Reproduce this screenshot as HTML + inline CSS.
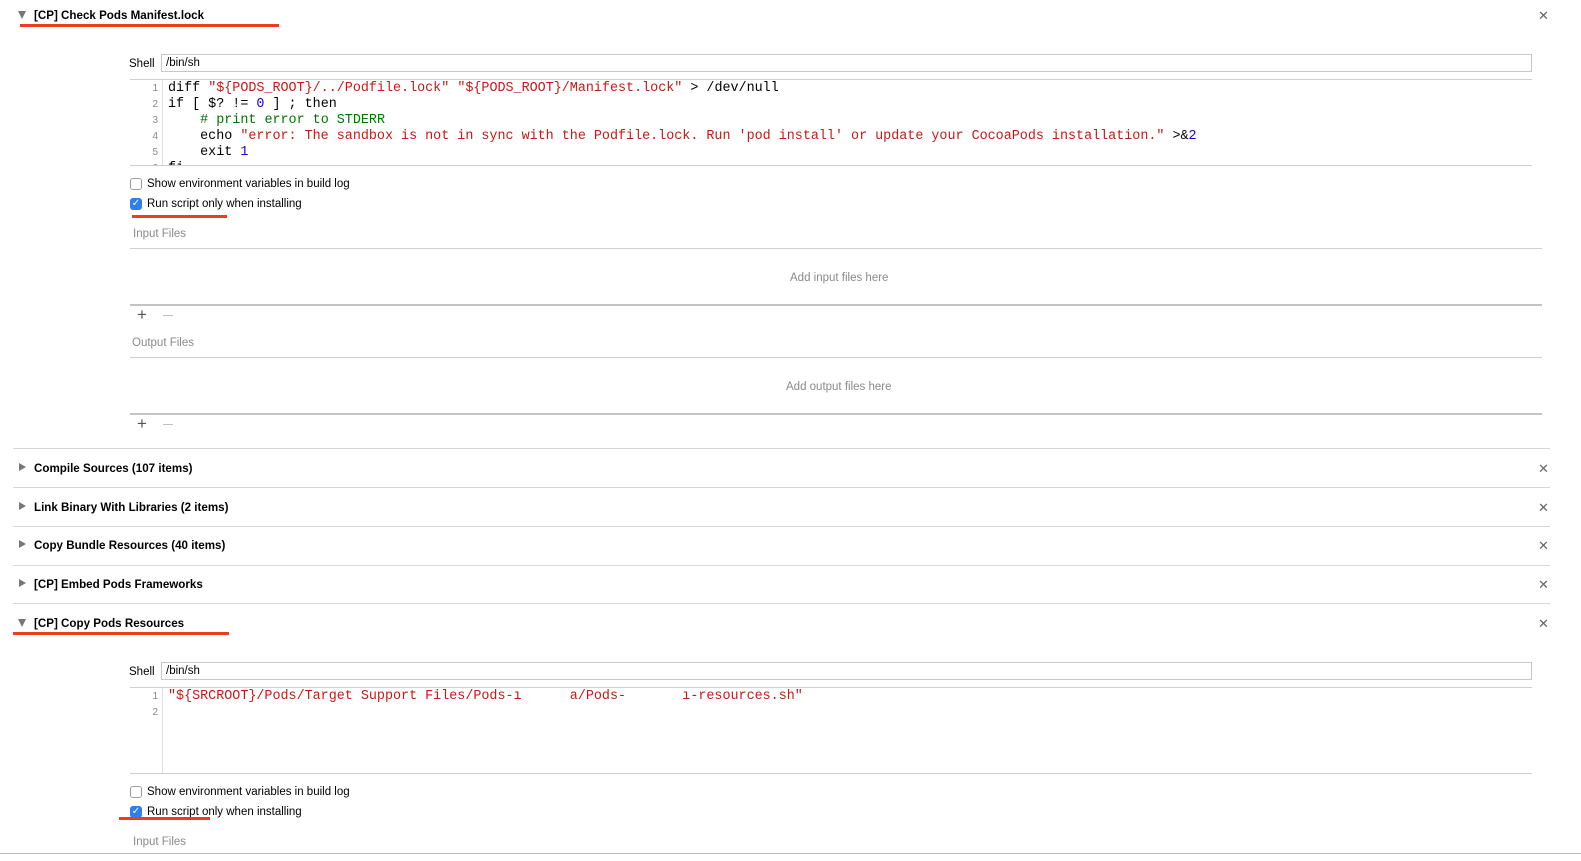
<!DOCTYPE html>
<html><head><meta charset="utf-8"><style>
*{margin:0;padding:0;box-sizing:border-box}
body{width:1581px;height:861px;background:#fff;position:relative;overflow:hidden;font-family:"Liberation Sans",Arial,sans-serif;color:#000}
.a{position:absolute}
.h{font-weight:bold;font-size:11.6px;margin-top:1px}
.tri{position:absolute;width:0;height:0}
.down{border-left:4.5px solid transparent;border-right:4.5px solid transparent;border-top:8px solid #777}
.right{border-top:4.5px solid transparent;border-bottom:4.5px solid transparent;border-left:7px solid #777}
.x{position:absolute;font-size:13px;color:#666;left:1538px;margin-top:1px}
.red{position:absolute;height:3px;background:#f03b20}
.sep{position:absolute;left:13px;width:1537px;height:1px;background:#d8d8d8}
.lbl{font-size:11.5px;margin-top:1px}
.gray{color:#8a8a8a;font-size:11.5px;margin-top:1px}
.inp{position:absolute;left:161px;width:1371px;height:18px;border:1px solid #c8c8c8;font-size:11.5px;padding:2px 4px}
.code{position:absolute;left:168px;font-family:"Liberation Mono",monospace;font-size:13.4px;line-height:16px;white-space:pre;margin-top:1px}
.ln{position:absolute;left:140px;width:18px;text-align:right;font-family:"Liberation Sans",sans-serif;font-size:10px;line-height:16px;color:#888;margin-top:1px}
.s{color:#c41a16}.c{color:#007400}.n{color:#1c00cf}
.cb{position:absolute;left:130px;width:12px;height:12px;border:1px solid #999;border-radius:3px;background:#fff}
.cbo{background:#2d7ff0;border-color:#2d7ff0;color:#fff;font-size:10px;line-height:10px;text-align:center}
.hl{position:absolute;height:1px;background:#cfcfcf}
.pm{position:absolute;font-size:17px;color:#555}
.mn{position:absolute;width:10px;height:1px;background:#c0c0c0}
</style></head><body>

<div class="tri down" style="left:18px;top:11px"></div>
<div class="a h" style="left:34px;top:8px">[CP] Check Pods Manifest.lock</div>
<div class="red" style="left:20px;top:24px;width:259px"></div>
<div class="x" style="top:7px">✕</div>

<div class="a lbl" style="left:129px;top:57px">Shell</div>
<div class="inp" style="top:54px">/bin/sh</div>
<div class="hl" style="left:130px;top:79px;width:1402px"></div>
<div class="a" style="left:162px;top:80px;width:1px;height:86px;background:#e0e0e0"></div>
<div class="a" style="left:130px;top:80px;width:1402px;height:86px;overflow:hidden">
<div class="ln" style="left:10px;top:0">1<br>2<br>3<br>4<br>5<br>6</div>
<div class="code" style="left:38px;top:0">diff <span class="s">"${PODS_ROOT}/../Podfile.lock"</span> <span class="s">"${PODS_ROOT}/Manifest.lock"</span> &gt; /dev/null
if [ $? != <span class="n">0</span> ] ; then
    <span class="c"># print error to STDERR</span>
    echo <span class="s">"error: The sandbox is not in sync with the Podfile.lock. Run 'pod install' or update your CocoaPods installation."</span> &gt;&amp;<span class="n">2</span>
    exit <span class="n">1</span>
fi</div>
</div>
<div class="hl" style="left:130px;top:165px;width:1402px"></div>

<div class="cb" style="top:178px"></div>
<div class="a lbl" style="left:147px;top:177px">Show environment variables in build log</div>
<div class="cb cbo" style="top:198px">✓</div>
<div class="a lbl" style="left:147px;top:197px">Run script only when installing</div>
<div class="red" style="left:132px;top:215px;width:95px"></div>

<div class="a gray" style="left:133px;top:227px">Input Files</div>
<div class="hl" style="left:130px;top:248px;width:1412px"></div>
<div class="a gray" style="left:790px;top:271px">Add input files here</div>
<div class="hl" style="left:130px;top:304px;width:1412px;height:2px;background:#c4c4c4"></div>
<div class="pm" style="left:137px;top:305px">+</div>
<div class="mn" style="left:163px;top:315px"></div>

<div class="a gray" style="left:132px;top:336px">Output Files</div>
<div class="hl" style="left:130px;top:357px;width:1412px"></div>
<div class="a gray" style="left:786px;top:380px">Add output files here</div>
<div class="hl" style="left:130px;top:413px;width:1412px;height:2px;background:#c4c4c4"></div>
<div class="pm" style="left:137px;top:414px">+</div>
<div class="mn" style="left:163px;top:424px"></div>

<div class="sep" style="top:448px"></div>
<div class="tri right" style="left:19px;top:463px"></div>
<div class="a h" style="left:34px;top:461px">Compile Sources (107 items)</div>
<div class="x" style="top:460px">✕</div>
<div class="sep" style="top:487px"></div>
<div class="tri right" style="left:19px;top:502px"></div>
<div class="a h" style="left:34px;top:500px">Link Binary With Libraries (2 items)</div>
<div class="x" style="top:499px">✕</div>
<div class="sep" style="top:526px"></div>
<div class="tri right" style="left:19px;top:540px"></div>
<div class="a h" style="left:34px;top:538px">Copy Bundle Resources (40 items)</div>
<div class="x" style="top:537px">✕</div>
<div class="sep" style="top:565px"></div>
<div class="tri right" style="left:19px;top:579px"></div>
<div class="a h" style="left:34px;top:577px">[CP] Embed Pods Frameworks</div>
<div class="x" style="top:576px">✕</div>
<div class="sep" style="top:603px"></div>
<div class="tri down" style="left:18px;top:619px"></div>
<div class="a h" style="left:34px;top:616px">[CP] Copy Pods Resources</div>
<div class="red" style="left:13px;top:632px;width:216px"></div>
<div class="x" style="top:615px">✕</div>

<div class="a lbl" style="left:129px;top:665px">Shell</div>
<div class="inp" style="top:662px">/bin/sh</div>
<div class="hl" style="left:130px;top:687px;width:1402px"></div>
<div class="a" style="left:162px;top:688px;width:1px;height:86px;background:#e0e0e0"></div>
<div class="ln" style="top:688px">1<br>2</div>
<div class="code" style="top:688px"><span class="s">"${SRCROOT}/Pods/Target Support Files/Pods-ı      a/Pods-       ı-resources.sh"</span></div>
<div class="hl" style="left:130px;top:773px;width:1402px"></div>

<div class="cb" style="top:786px"></div>
<div class="a lbl" style="left:147px;top:785px">Show environment variables in build log</div>
<div class="cb cbo" style="top:806px">✓</div>
<div class="a lbl" style="left:147px;top:805px">Run script only when installing</div>
<div class="red" style="left:119px;top:817px;width:91px"></div>
<div class="a gray" style="left:133px;top:835px">Input Files</div>
<div class="hl" style="left:0;top:853px;width:1581px;background:#bbb"></div>
</body></html>
